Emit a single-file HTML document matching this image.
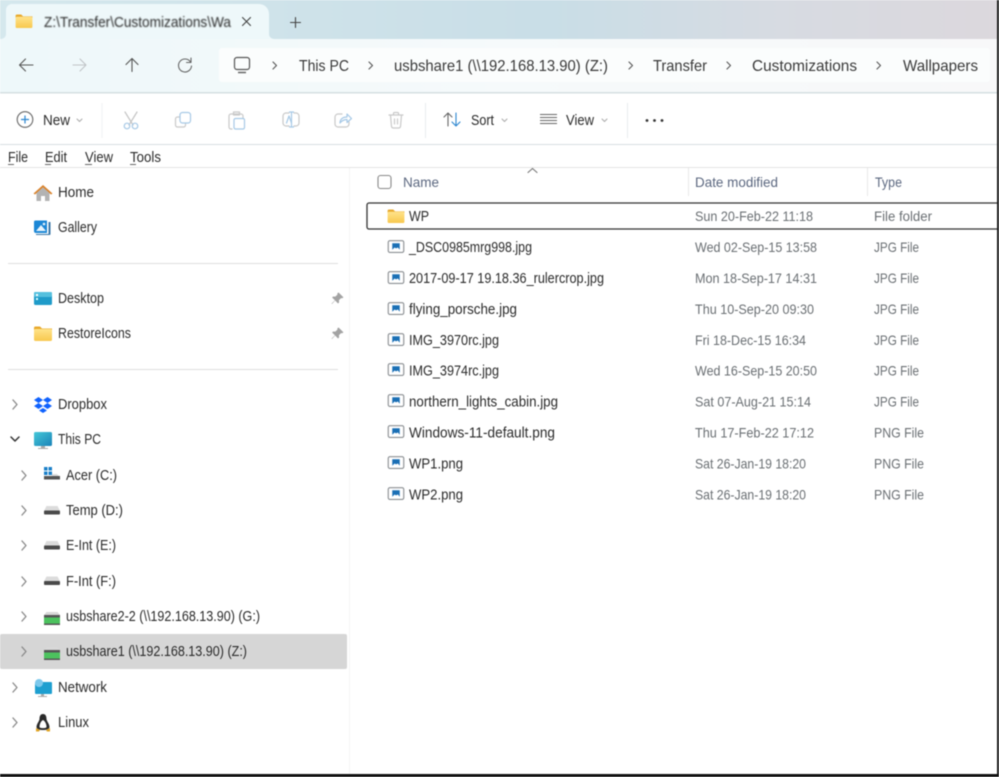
<!DOCTYPE html>
<html><head><meta charset="utf-8"><title>Wallpapers</title>
<style>
html,body{margin:0;padding:0;background:#fff;width:999px;height:777px;overflow:hidden}
svg{display:block;filter:blur(.4px)}
text{font-family:"Liberation Sans",sans-serif;fill:#2b2b2b;font-size:14.5px}
.a text{font-size:16px;fill:#3a3a3a}
.d text{fill:#6a6f73;font-size:14px}
.h text{fill:#5c6880;font-size:14px}
.s{fill:none;stroke-linecap:round;stroke-linejoin:round}
</style></head><body>
<svg width="999" height="777" viewBox="0 0 999 777" xmlns="http://www.w3.org/2000/svg">
<defs>
<linearGradient id="tb" x1="0" x2="1" y1="0" y2="0"><stop offset="0" stop-color="#d5e8ed"/><stop offset=".55" stop-color="#c9dee7"/><stop offset=".78" stop-color="#d7dbe2"/><stop offset="1" stop-color="#dcd8dd"/></linearGradient>
<linearGradient id="nv" x1="0" x2="1" y1="0" y2="0"><stop offset="0" stop-color="#eef8fa"/><stop offset=".5" stop-color="#f6fafb"/><stop offset="1" stop-color="#f8f8f9"/></linearGradient>
<linearGradient id="fo" x1="0" x2="0" y1="0" y2="1"><stop offset="0" stop-color="#ffe38a"/><stop offset="1" stop-color="#f8c84e"/></linearGradient>
<linearGradient id="mon" x1="0" x2="1" y1="0" y2="1"><stop offset="0" stop-color="#45c8d8"/><stop offset="1" stop-color="#1a83b8"/></linearGradient>
<symbol id="folder" viewBox="0 0 18 15"><path d="M0 2a1.500 1.500 0 0 1 1.500-1.500h4.500l2 2H18V4H0z" fill="#e8a92c"/><rect x="0" y="3" width="18" height="12" rx="1.500" fill="url(#fo)"/></symbol>
<symbol id="img" viewBox="0 0 18 15"><rect x=".7" y=".7" width="16.600" height="12.600" rx="1.800" fill="#fff" stroke="#8b8f93" stroke-width="1.200"/><path d="M5 10.500V3.500h8v7l-2-2.500-2 1-1.500-1z" fill="#1a6fb5"/></symbol>
<symbol id="drive" viewBox="0 0 16 10"><path d="M2.500 0h11L16 5H0z" fill="#dcdcdc"/><rect y="4.500" width="16" height="4" rx="1" fill="#4a4a4a"/></symbol>
<symbol id="ndrive" viewBox="0 0 16 14"><path d="M2.500 0h11L16 3H0z" fill="#d8d8d8"/><rect y="3" width="16" height="2.500" fill="#555"/><rect y="5.500" width="16" height="6" fill="#4cc25e"/><rect y="11.500" width="16" height="1.500" fill="#555"/></symbol>
<symbol id="pin" viewBox="0 0 12 12"><path d="M7 .5l4.500 4.500-1.200.8-1-.2-2 2 .2 2-1 1L3.800 7.900.9 11.100.5 10.700 3.600 7.600 1 5.100l1-1 2 .2 2-2-.2-1z" fill="#a3a3a3"/></symbol>
</defs>

<rect width="999" height="777" fill="#fff"/>
<rect width="999" height="39" fill="url(#tb)"/>
<rect y="39" width="999" height="54" fill="url(#nv)"/>
<path d="M0 39h1a5 5 0 0 0 5-5V10a6 6 0 0 1 6-6h247a10 10 0 0 1 10 10v20a5 5 0 0 0 5 5z" fill="#eef8fa"/>
<use href="#folder" x="15" y="14" width="18" height="14"/>
<svg x="44" y="10" width="181" height="24"><text x="0" y="17" textLength="187" lengthAdjust="spacingAndGlyphs" style="font-size:15px">Z:\Transfer\Customizations\Wa</text></svg>
<path d="M242.500 17.500l8 8m0-8l-8 8" class="s" stroke="#444" stroke-width="1.100"/>
<path d="M295.500 17.500v10m-5-5h10" class="s" stroke="#444" stroke-width="1.100"/>

<path d="M33 65H20.500m5-6l-6 6 6 6" class="s" stroke="#555" stroke-width="1.100"/>
<path d="M86 65H73m7-6l6 6-6 6" class="s" stroke="#c0c4c7" stroke-width="1.100"/>
<path d="M132 71.500V58.500m-6 6l6-6 6 6" class="s" stroke="#555" stroke-width="1.100"/>
<path d="M190.500 62a6.500 6.500 0 1 0 1 4M191 58v4.500h-4.500" class="s" stroke="#666" stroke-width="1.100"/>
<rect x="219" y="48" width="771" height="34" rx="3" fill="#fbfdfd"/>
<rect x="234.500" y="57.500" width="15" height="12" rx="2.500" fill="none" stroke="#555" stroke-width="1.200"/>
<path d="M238 72.500h8" stroke="#666" stroke-width="1.500"/>
<g class="s" stroke="#555" stroke-width="1.100">
<path d="M273 62l3.500 3.500-3.500 3.500M369 62l3.500 3.500-3.500 3.500M629 62l3.500 3.500-3.500 3.500M727 62l3.500 3.500-3.500 3.500M877 62l3.500 3.500-3.500 3.500"/>
</g>
<g class="a">
<text x="299" y="71" textLength="50" lengthAdjust="spacingAndGlyphs">This PC</text>
<text x="394" y="71" textLength="214" lengthAdjust="spacingAndGlyphs">usbshare1 (\\192.168.13.90) (Z:)</text>
<text x="653" y="71" textLength="54" lengthAdjust="spacingAndGlyphs">Transfer</text>
<text x="752" y="71" textLength="105" lengthAdjust="spacingAndGlyphs">Customizations</text>
<text x="903" y="71" textLength="75" lengthAdjust="spacingAndGlyphs">Wallpapers</text>
</g>
<rect y="92" width="997" height="1.500" fill="#d5dfe2"/>

<circle cx="25" cy="119.500" r="7.800" fill="none" stroke="#666" stroke-width="1.100"/>
<path d="M25 115.500v8m-4-4h8" stroke="#2c86d0" stroke-width="1.200"/>
<text x="43" y="125" textLength="27" lengthAdjust="spacingAndGlyphs">New</text>
<path d="M77 119l2.500 2.500 2.500-2.500" class="s" stroke="#aaa"/>
<rect x="101.500" y="103" width="1" height="35" fill="#f0f2f3"/>
<g class="s" stroke-width="1.200">
<path d="M125 112l8 13M137 112l-8 13" stroke="#c5c5c5"/>
<circle cx="127" cy="126" r="2.800" stroke="#a7c9e6"/><circle cx="135" cy="126" r="2.800" stroke="#a7c9e6"/>
<path d="M179 117h-1.500a2 2 0 0 0-2 2v6a2 2 0 0 0 2 2h6a2 2 0 0 0 2-2v-1" stroke="#c9c9c9"/>
<rect x="180" y="112.500" width="10.500" height="10.500" rx="2.500" stroke="#a7c9e6"/>
<path d="M232 129h-1a2 2 0 0 1-2-2v-11a2 2 0 0 1 2-2h10a2 2 0 0 1 2 2v2" stroke="#c9c9c9"/>
<rect x="233.500" y="112" width="6" height="3" stroke="#c9c9c9"/>
<rect x="234" y="118.500" width="10.500" height="10.500" rx="1.500" stroke="#a7c9e6"/>
<path d="M289 113h-3a3 3 0 0 0-3 3v7a3 3 0 0 0 3 3h3m5-13h2a3 3 0 0 1 3 3v7a3 3 0 0 1-3 3h-2" stroke="#c9c9c9"/>
<path d="M291.500 112v15m-2-15h4m-4 15h4" stroke="#a7c9e6"/>
<path d="M286.500 123l2.500-7 2.500 7" stroke="#a7c9e6"/>
<path d="M342 114h-4a3 3 0 0 0-3 3v7a3 3 0 0 0 3 3h8a3 3 0 0 0 3-3v-2" stroke="#c9c9c9"/>
<path d="M340 123c0-4 3-6 7-6v-3l4.500 4.500-4.500 4v-3c-3 0-5 1-7 3.500z" stroke="#a7c9e6"/>
<path d="M389 115h14M393.500 115v-1.500a1 1 0 0 1 1-1h3a1 1 0 0 1 1 1v1.500M390.500 115l1 11.500a2 2 0 0 0 2 1.500h5a2 2 0 0 0 2-1.500l1-11.500M394.500 119v5M397.500 119v5" stroke="#c9c9c9"/>
</g>
<rect x="425" y="103" width="1" height="35" fill="#e8ecee"/>
<path d="M448 126v-13m-4 4l4-4 4 4" class="s" stroke="#666" stroke-width="1.100"/>
<path d="M456 113v13m-4-4l4 4 4-4" class="s" stroke="#2c86d0" stroke-width="1.100"/>
<text x="471" y="125" textLength="23" lengthAdjust="spacingAndGlyphs">Sort</text>
<path d="M502 119l2.500 2.500 2.500-2.500" class="s" stroke="#aaa"/>
<path d="M540 114.500h17M540 117.500h17M540 120.500h17M540 123.500h17" stroke="#666" stroke-width="1"/>
<text x="566" y="125" textLength="28" lengthAdjust="spacingAndGlyphs">View</text>
<path d="M602 119l2.500 2.500 2.500-2.500" class="s" stroke="#aaa"/>
<rect x="627" y="103" width="1" height="35" fill="#e8ecee"/>
<circle cx="647" cy="120.500" r="1.400" fill="#333"/><circle cx="654.500" cy="120.500" r="1.400" fill="#333"/><circle cx="662" cy="120.500" r="1.400" fill="#333"/>
<rect y="144" width="997" height="1" fill="#d8dfe2"/>

<text x="8" y="162" textLength="20" lengthAdjust="spacingAndGlyphs">File</text>
<text x="45" y="162" textLength="22" lengthAdjust="spacingAndGlyphs">Edit</text>
<text x="85" y="162" textLength="28" lengthAdjust="spacingAndGlyphs">View</text>
<text x="130" y="162" textLength="31" lengthAdjust="spacingAndGlyphs">Tools</text>
<path d="M8 164.500h6M45 164.500h6M85 164.500h7M130 164.500h6" stroke="#333" stroke-width=".8"/>
<rect y="167" width="997" height="1" fill="#e3e3e3"/>
<rect x="349" y="168" width="1" height="606" fill="#f5f5f5"/>

<path d="M43 185l-9.500 8.500 1.500 1 8-7 8 7 1.500-1z" fill="#d9822b"/>
<path d="M36.500 193l6.500-5.500 6.500 5.500v8h-4.500v-5h-4v5h-4.500z" fill="#b3b3b3"/>
<path d="M34 222a1.500 1.500 0 0 1 1.500-1.500H47V233H36a2 2 0 0 1-2-2z" fill="#1b87d6"/>
<path d="M36 231l5-6 5 6z" fill="#e8f4fc"/><circle cx="44" cy="224" r="1.300" fill="#e8f4fc"/>
<path d="M48.500 222v12H36v1h13.500a1 1 0 0 0 1-1v-12z" fill="#3c78a8"/>
<text x="58" y="197" textLength="36" lengthAdjust="spacingAndGlyphs">Home</text>
<text x="58" y="232" textLength="39" lengthAdjust="spacingAndGlyphs">Gallery</text>
<rect x="8" y="263" width="330" height="1" fill="#dfdfdf"/>
<rect x="34" y="292" width="18" height="13" rx="1.500" fill="#1f9bc9"/>
<rect x="34" y="292" width="18" height="5" rx="1.500" fill="#55c0de"/>
<rect x="36" y="294" width="2" height="2" fill="#fff"/><rect x="36" y="298" width="2" height="2" fill="#dff"/>
<text x="58" y="303" textLength="46" lengthAdjust="spacingAndGlyphs">Desktop</text>
<use href="#pin" x="331" y="292" width="13" height="13"/>
<use href="#folder" x="34" y="326" width="18" height="15"/>
<text x="58" y="338" textLength="73" lengthAdjust="spacingAndGlyphs">RestoreIcons</text>
<use href="#pin" x="331" y="327" width="13" height="13"/>
<rect x="8" y="369" width="330" height="1" fill="#dfdfdf"/>

<g class="s" stroke="#888" stroke-width="1.300">
<path d="M13 400l4 4.500-4 4.500M13 683l4 4.500-4 4.500M13 718l4 4.500-4 4.500"/>
<path d="M22 471l4 4.500-4 4.500M22 506l4 4.500-4 4.500M22 541l4 4.500-4 4.500M22 577l4 4.500-4 4.500M22 612l4 4.500-4 4.500"/>
</g>
<path d="M11 437l4 4 4-4" class="s" stroke="#333" stroke-width="1.500"/>
<path d="M38.500 397l4.500 3-4.500 3-4.500-3zM47.500 397l4.500 3-4.500 3-4.500-3zM38.500 403l4.500 3-4.500 3-4.500-3zM47.500 403l4.500 3-4.500 3-4.500-3zM43 408l4 2.500-4 2.500-4-2.500z" fill="#0f62fe"/>
<text x="58" y="409" textLength="49" lengthAdjust="spacingAndGlyphs">Dropbox</text>
<rect x="34" y="432" width="18" height="14" rx="1.500" fill="url(#mon)"/>
<path d="M41 446h4v2h3v1h-10v-1h3z" fill="#aaa"/>
<text x="58" y="444" textLength="43" lengthAdjust="spacingAndGlyphs">This PC</text>

<rect x="44" y="467" width="3.500" height="3.500" fill="#1a7fc8"/><rect x="48.500" y="467" width="3.500" height="3.500" fill="#1a7fc8"/><rect x="44" y="471.500" width="3.500" height="3.500" fill="#1a7fc8"/><rect x="48.500" y="471.500" width="3.500" height="3.500" fill="#1a7fc8"/>
<path d="M44 476h16v3.500H44z" fill="#555"/><path d="M52 474h5l2 2h-7z" fill="#ddd"/>
<text x="66" y="480" textLength="51" lengthAdjust="spacingAndGlyphs">Acer (C:)</text>
<use href="#drive" x="44" y="506" width="16" height="10"/>
<text x="66" y="515" textLength="57" lengthAdjust="spacingAndGlyphs">Temp (D:)</text>
<use href="#drive" x="44" y="541" width="16" height="10"/>
<text x="66" y="550" textLength="50" lengthAdjust="spacingAndGlyphs">E-Int (E:)</text>
<use href="#drive" x="44" y="576.500" width="16" height="10"/>
<text x="66" y="586" textLength="50" lengthAdjust="spacingAndGlyphs">F-Int (F:)</text>
<use href="#ndrive" x="44" y="612" width="16" height="14"/>
<text x="66" y="621" textLength="194" lengthAdjust="spacingAndGlyphs">usbshare2-2 (\\192.168.13.90) (G:)</text>
<rect y="634" width="347" height="35" rx="2" fill="#d6d6d6"/>
<path d="M22 647l4 4.500-4 4.500" class="s" stroke="#888" stroke-width="1.300"/>
<use href="#ndrive" x="44" y="647" width="16" height="14"/>
<text x="66" y="656" textLength="181" lengthAdjust="spacingAndGlyphs">usbshare1 (\\192.168.13.90) (Z:)</text>
<rect x="35" y="682" width="17" height="12" rx="1" fill="#1e9fd0"/>
<circle cx="39" cy="683" r="4" fill="#7cc8ec"/>
<path d="M41 694h3v2h3v1h-9v-1h3z" fill="#aaa"/>
<text x="58" y="692" textLength="49" lengthAdjust="spacingAndGlyphs">Network</text>
<path d="M43 714c-3 0-3.500 3-3.500 5 0 2-3 5-3 8 0 2 3 3 6.500 3s6.500-1 6.500-3c0-3-3-6-3-8 0-2-.5-5-3.500-5z" fill="#2a2a2a"/>
<path d="M43 720c-2 1-3.500 4-3.500 7 0 1.500 7 1.500 7 0 0-3-1.500-6-3.500-7z" fill="#fff"/>
<path d="M36 728l4 2-1 1.500h-3zM50 728l-4 2 1 1.500h3z" fill="#e0a526"/>
<text x="58" y="727" textLength="31" lengthAdjust="spacingAndGlyphs">Linux</text>

<path d="M528 172.500l4.500-4 4.500 4" class="s" stroke="#777" stroke-width="1.100"/>
<rect x="378" y="175.500" width="13" height="13" rx="2.500" fill="#fff" stroke="#888" stroke-width="1.100"/>
<g class="h">
<text x="403" y="187" textLength="36" lengthAdjust="spacingAndGlyphs">Name</text>
<text x="695" y="187" textLength="83" lengthAdjust="spacingAndGlyphs">Date modified</text>
<text x="875" y="187" textLength="27" lengthAdjust="spacingAndGlyphs">Type</text>
</g>
<rect x="688" y="168" width="1" height="28" fill="#e9e9e9"/>
<rect x="867" y="168" width="1" height="28" fill="#e9e9e9"/>
<path d="M999 203H369a2 2 0 0 0-2 2v22a2 2 0 0 0 2 2h630" fill="#fff" stroke="#333" stroke-width="1.300"/>

<use href="#folder" x="387" y="209" width="18" height="14"/>
<use href="#img" x="387" y="240" width="18" height="14"/>
<use href="#img" x="387" y="271" width="18" height="14"/>
<use href="#img" x="387" y="302" width="18" height="14"/>
<use href="#img" x="387" y="333" width="18" height="14"/>
<use href="#img" x="387" y="363" width="18" height="14"/>
<use href="#img" x="387" y="394" width="18" height="14"/>
<use href="#img" x="387" y="425" width="18" height="14"/>
<use href="#img" x="387" y="456" width="18" height="14"/>
<use href="#img" x="387" y="487" width="18" height="14"/>
<text x="409" y="221" textLength="20" lengthAdjust="spacingAndGlyphs">WP</text>
<text x="409" y="252" textLength="123" lengthAdjust="spacingAndGlyphs">_DSC0985mrg998.jpg</text>
<text x="409" y="283" textLength="195" lengthAdjust="spacingAndGlyphs">2017-09-17 19.18.36_rulercrop.jpg</text>
<text x="409" y="314" textLength="108" lengthAdjust="spacingAndGlyphs">flying_porsche.jpg</text>
<text x="409" y="345" textLength="90" lengthAdjust="spacingAndGlyphs">IMG_3970rc.jpg</text>
<text x="409" y="375.500" textLength="90" lengthAdjust="spacingAndGlyphs">IMG_3974rc.jpg</text>
<text x="409" y="406.500" textLength="149" lengthAdjust="spacingAndGlyphs">northern_lights_cabin.jpg</text>
<text x="409" y="437.500" textLength="146" lengthAdjust="spacingAndGlyphs">Windows-11-default.png</text>
<text x="409" y="468.500" textLength="54" lengthAdjust="spacingAndGlyphs">WP1.png</text>
<text x="409" y="499.500" textLength="54" lengthAdjust="spacingAndGlyphs">WP2.png</text>
<g class="d">
<text x="695" y="221" textLength="118" lengthAdjust="spacingAndGlyphs">Sun 20-Feb-22 11:18</text>
<text x="695" y="252" textLength="122" lengthAdjust="spacingAndGlyphs">Wed 02-Sep-15 13:58</text>
<text x="695" y="283" textLength="122" lengthAdjust="spacingAndGlyphs">Mon 18-Sep-17 14:31</text>
<text x="695" y="314" textLength="119" lengthAdjust="spacingAndGlyphs">Thu 10-Sep-20 09:30</text>
<text x="695" y="345" textLength="111" lengthAdjust="spacingAndGlyphs">Fri 18-Dec-15 16:34</text>
<text x="695" y="375.500" textLength="122" lengthAdjust="spacingAndGlyphs">Wed 16-Sep-15 20:50</text>
<text x="695" y="406.500" textLength="116" lengthAdjust="spacingAndGlyphs">Sat 07-Aug-21 15:14</text>
<text x="695" y="437.500" textLength="119" lengthAdjust="spacingAndGlyphs">Thu 17-Feb-22 17:12</text>
<text x="695" y="468.500" textLength="111" lengthAdjust="spacingAndGlyphs">Sat 26-Jan-19 18:20</text>
<text x="695" y="499.500" textLength="111" lengthAdjust="spacingAndGlyphs">Sat 26-Jan-19 18:20</text>
<text x="874" y="221" textLength="58" lengthAdjust="spacingAndGlyphs">File folder</text>
<text x="874" y="252" textLength="45" lengthAdjust="spacingAndGlyphs">JPG File</text>
<text x="874" y="283" textLength="45" lengthAdjust="spacingAndGlyphs">JPG File</text>
<text x="874" y="314" textLength="45" lengthAdjust="spacingAndGlyphs">JPG File</text>
<text x="874" y="345" textLength="45" lengthAdjust="spacingAndGlyphs">JPG File</text>
<text x="874" y="375.500" textLength="45" lengthAdjust="spacingAndGlyphs">JPG File</text>
<text x="874" y="406.500" textLength="45" lengthAdjust="spacingAndGlyphs">JPG File</text>
<text x="874" y="437.500" textLength="50" lengthAdjust="spacingAndGlyphs">PNG File</text>
<text x="874" y="468.500" textLength="50" lengthAdjust="spacingAndGlyphs">PNG File</text>
<text x="874" y="499.500" textLength="50" lengthAdjust="spacingAndGlyphs">PNG File</text>
</g>
<rect x="997" y="0" width="2" height="777" fill="#1a1a1a"/>
<rect x="0" y="774" width="999" height="3" fill="#111"/>
</svg>
</body></html>
